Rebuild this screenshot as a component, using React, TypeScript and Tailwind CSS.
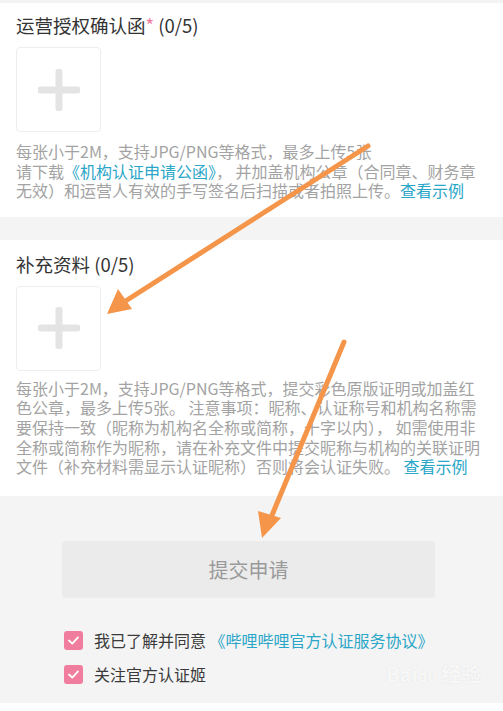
import React from 'react';

const font = { fontFamily: '"Noto Sans CJK SC", "Noto Sans", sans-serif' };

const UploadBox: React.FC = () => (
    <div className="w-[85px] h-[85px] rounded-[4px] border border-[#eeeeee] bg-white flex items-center justify-center">
        <svg width="42" height="42" viewBox="0 0 42 42">
            <path d="M21 3 V39 M3 21 H39" stroke="#e4e4e4" strokeWidth="7" strokeLinecap="round" />
        </svg>
    </div>
);

const Check: React.FC = () => (
    <span className="w-[19px] h-[19px] rounded-[3px] bg-[#f07d9e] flex items-center justify-center shrink-0">
        <svg width="13" height="13" viewBox="0 0 13 13">
            <path d="M2 6.5 L5.3 9.6 L11 3.4" fill="none" stroke="white" strokeWidth="1.8" strokeLinecap="round" strokeLinejoin="round" />
        </svg>
    </span>
);

const Link: React.FC<{ children: React.ReactNode }> = ({ children }) => (
    <span className="text-[#2aa6c8]">{children}</span>
);

const App: React.FC = () => {
    return (
        <div className="relative w-[503px] h-[711px] overflow-hidden bg-[#f4f4f4]" style={font}>
            {/* 运营授权确认函 */}
            <section className="bg-white border-t-[3px] border-[#f3f3f3] px-4 pt-[9px] pb-[16px]">
                <h2 className="text-[18.5px] leading-[26px] text-[#333333]">
                    运营授权确认函<span className="text-[#f07d9e]">*</span> (0/5)
                </h2>
                <div className="mt-[9px]">
                    <UploadBox />
                </div>
                <div className="mt-[10px] text-[16px] leading-[19.5px] text-[#a3a3a3] whitespace-nowrap">
                    <div>每张小于2M，支持JPG/PNG等格式，最多上传5张</div>
                    <div>
                        请下载<Link>《机构认证申请公函》</Link>， 并加盖机构公章（合同章、财务章
                    </div>
                    <div>
                        无效）和运营人有效的手写签名后扫描或者拍照上传。<Link>查看示例</Link>
                    </div>
                </div>
            </section>

            {/* 补充资料 */}
            <section className="mt-[23px] bg-white px-4 pt-[11px] pb-[19px]">
                <h2 className="text-[18.5px] leading-[26px] text-[#333333]">补充资料 (0/5)</h2>
                <div className="mt-[9px]">
                    <UploadBox />
                </div>
                <div className="mt-[8px] text-[16px] leading-[19.7px] text-[#a3a3a3] whitespace-nowrap">
                    <div>每张小于2M，支持JPG/PNG等格式，提交彩色原版证明或加盖红</div>
                    <div>色公章，最多上传5张。 注意事项：昵称、认证称号和机构名称需</div>
                    <div>要保持一致（昵称为机构名全称或简称，十字以内）， 如需使用非</div>
                    <div>全称或简称作为昵称，请在补充文件中提交昵称与机构的关联证明</div>
                    <div>
                        文件（补充材料需显示认证昵称）否则将会认证失败。 <Link>查看示例</Link>
                    </div>
                </div>
            </section>

            {/* 提交 */}
            <div className="flex justify-center pt-[45px]">
                <button className="w-[373px] h-[57px] rounded-[4px] bg-[#ebebeb] text-[20px] text-[#9a9a9a] ml-[-6px]">
                    提交申请
                </button>
            </div>

            <div className="pl-[64px] pt-[33px] flex flex-col gap-[15px] text-[16px] text-[#3a3a3a]">
                <label className="flex items-center gap-[11px] leading-[19px]">
                    <Check />
                    <span>
                        我已了解并同意 <Link>《哔哩哔哩官方认证服务协议》</Link>
                    </span>
                </label>
                <label className="flex items-center gap-[11px] leading-[19px]">
                    <Check />
                    <span>关注官方认证姬</span>
                </label>
            </div>

            <div className="absolute left-0 right-0 bottom-0 h-[8px] bg-white" />

            {/* 水印 */}
            <div className="absolute left-[386px] top-[664px] text-[20px] font-bold text-white/80 leading-none" style={{ textShadow: '0 0 1px #d6d6d6' }}>
                Bai<span className="text-[15px]">du</span> 经验
            </div>

            {/* 标注箭头 */}
            <svg className="absolute left-0 top-0 pointer-events-none" width="503" height="711">
                <g stroke="#f4954a" strokeWidth="5" strokeLinecap="round" fill="#f4954a">
                    <line x1="368" y1="146" x2="124" y2="302" />
                    <line x1="344" y1="342" x2="270" y2="520" />
                </g>
                <polygon points="107,314 118,289 132,309" fill="#f4954a" />
                <polygon points="262,538 258,511 281,518" fill="#f4954a" />
            </svg>
        </div>
    );
};

export default App;
